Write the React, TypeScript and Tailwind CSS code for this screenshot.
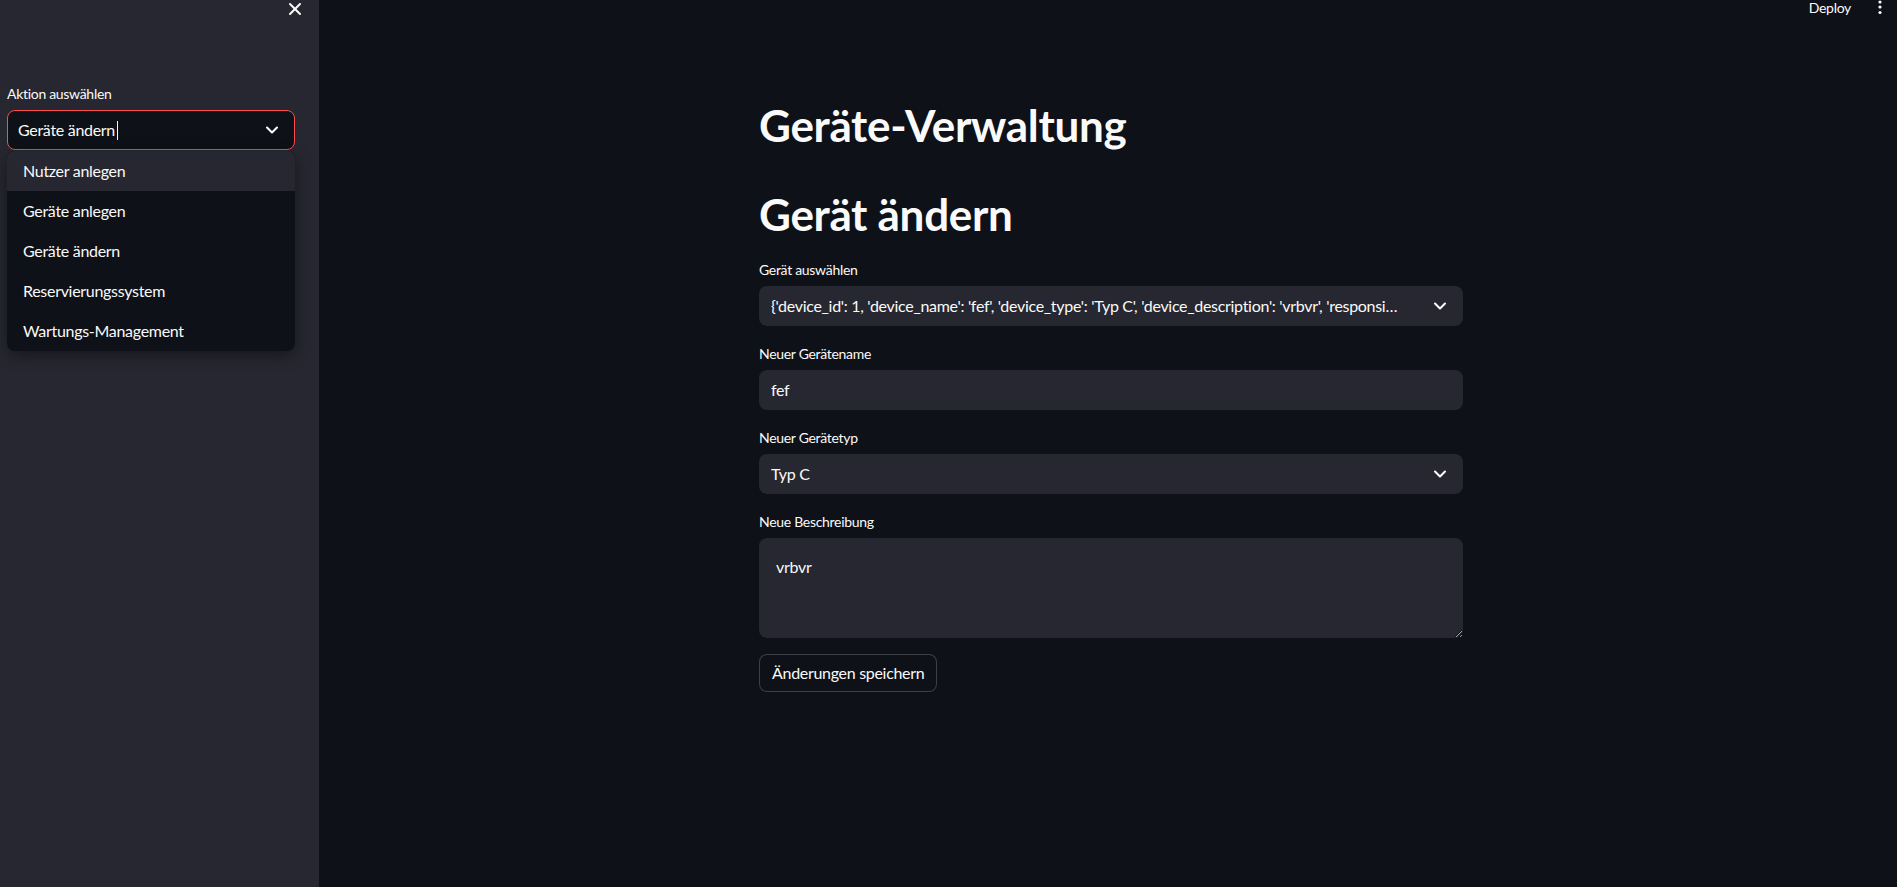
import React from "react";
import { ChevronDown, X } from "lucide-react";

const FONT = { fontFamily: "Lato, 'Noto Sans', sans-serif" };

function Label({ children }: { children: React.ReactNode }) {
  return (
    <div className="h-[24px] leading-[24px] text-[14px] text-[#fafafa] mb-[4px]">{children}</div>
  );
}

function SelectBox({ value }: { value: string }) {
  return (
    <div className="h-[40px] w-full rounded-lg bg-[#262730] flex items-center pl-[12px] pr-[13px]">
      <div className="flex-1 min-w-0 whitespace-nowrap overflow-hidden text-[16px] text-[#fafafa] pr-[18px]">{value}</div>
      <ChevronDown size={20} strokeWidth={2.5} className="text-[#fafafa] shrink-0" />
    </div>
  );
}

export default function App() {
  const items = ["Nutzer anlegen", "Geräte anlegen", "Geräte ändern", "Reservierungssystem", "Wartungs-Management"];
  return (
    <div className="w-full h-screen flex overflow-hidden bg-[#0e1117] text-[#fafafa] tracking-[-0.3px]" style={FONT}>
      {/* Sidebar */}
      <aside className="relative w-[319px] shrink-0 h-full bg-[#262730]">
        <div className="flex justify-end pr-[14px] h-[20px]">
          <X size={20} strokeWidth={2.4} className="text-[#fafafa] -mt-[1px]" />
        </div>
        <div className="pl-[7px] pr-[24px] pt-[62px]">
          <Label>Aktion auswählen</Label>
          <div className="h-[40px] rounded-lg border border-[#ff4b4b] bg-[#0e1117] flex items-center pl-[10px] pr-[12px]">
            <div className="flex-1 flex items-center text-[16px] text-[#fafafa]">
              <span>Geräte ändern</span>
              <span className="ml-[2px] inline-block w-px h-[19px] bg-[#fafafa]" />
            </div>
            <ChevronDown size={20} strokeWidth={2.5} className="text-[#fafafa]" />
          </div>
        </div>
        {/* Dropdown menu overlay */}
        <div className="absolute left-[7px] top-[151px] w-[288px] rounded-lg overflow-hidden bg-[#0e1117] shadow-[0_4px_16px_rgba(0,0,0,0.4)]">
          {items.map((it, i) => (
            <div
              key={it}
              className={
                "h-[40px] flex items-center pl-[16px] text-[16px] text-[#fafafa] " +
                (i === 0 ? "bg-[#262730]" : "")
              }
            >
              {it}
            </div>
          ))}
        </div>
      </aside>

      {/* Main */}
      <main className="relative flex-1 h-full flex justify-center pl-[6px]">
        <div className="absolute top-0 right-0 flex items-start">
          <span className="text-[14px] leading-[16px] text-[#fafafa] mr-[27px]">Deploy</span>
          <svg width="4" height="16" viewBox="0 0 4 16" className="mr-[15px]">
            <circle cx="2" cy="2" r="1.6" fill="#fafafa" />
            <circle cx="2" cy="7" r="1.6" fill="#fafafa" />
            <circle cx="2" cy="12.5" r="1.6" fill="#fafafa" />
          </svg>
        </div>

        <div className="w-[704px] pt-[99px] flex flex-col">
          <h1 className="text-[44px] font-bold leading-[52px] h-[52px] mb-[37px]">Geräte-Verwaltung</h1>
          <h1 className="text-[44px] font-bold leading-[52px] h-[52px] mb-[18px]">Gerät ändern</h1>

          <Label>Gerät auswählen</Label>
          <SelectBox value="{'device_id': 1, 'device_name': 'fef', 'device_type': 'Typ C', 'device_description': 'vrbvr', 'responsi…" />

          <div className="mt-[16px]">
            <Label>Neuer Gerätename</Label>
            <div className="h-[40px] rounded-lg bg-[#262730] flex items-center pl-[12px] text-[16px] text-[#fafafa]">fef</div>
          </div>

          <div className="mt-[16px]">
            <Label>Neuer Gerätetyp</Label>
            <SelectBox value="Typ C" />
          </div>

          <div className="mt-[16px]">
            <Label>Neue Beschreibung</Label>
            <textarea
              readOnly
              defaultValue="vrbvr"
              className="block w-full h-[100px] rounded-lg bg-[#262730] text-[16px] leading-[1.6] text-[#fafafa] px-[17px] py-[16px] outline-none resize-y tracking-[-0.3px]"
              style={FONT}
            />
          </div>

          <div className="mt-[16px]">
            <button className="h-[38px] px-[12px] rounded-lg border border-[rgba(250,250,250,0.2)] bg-[#0e1117] text-[16px] text-[#fafafa] tracking-[-0.3px]">
              Änderungen speichern
            </button>
          </div>
        </div>
      </main>
    </div>
  );
}
